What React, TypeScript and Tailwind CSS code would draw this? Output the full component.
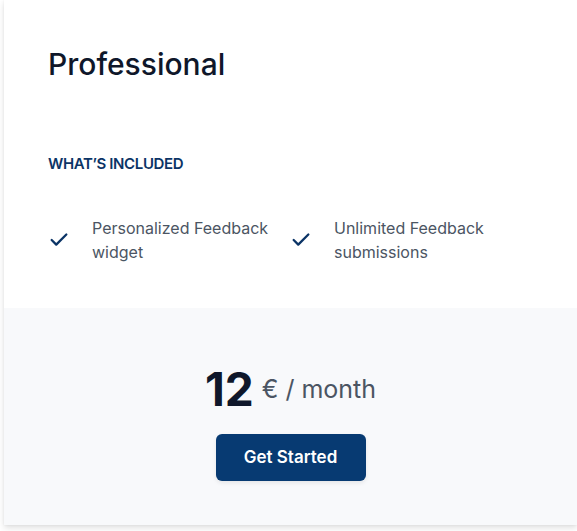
import React from 'react';

const features = ['Personalized Feedback widget', 'Unlimited Feedback submissions'];

const CheckIcon: React.FC = () => (
  <svg width="22" height="22" viewBox="0 0 24 24" fill="none" stroke="#0b3466" strokeWidth="2.5" strokeLinecap="round" strokeLinejoin="round" className="shrink-0">
    <path d="M20 6 9 17l-5-5" />
  </svg>
);

const App: React.FC = () => {
  return (
    <div className="min-h-[531px] w-[577px] bg-white font-['Inter',sans-serif]">
      <div className="ml-[4px] w-[573px] overflow-hidden bg-white shadow-[0_3px_6px_rgba(0,0,0,0.12),0_0_2px_rgba(0,0,0,0.06)]">
        <div className="px-[44px] pt-[46px] pb-[44px]">
          <h3 className="text-[30px] leading-[36px] font-medium text-[#0f172a]">Professional</h3>
          <h4 className="mt-[72px] text-[15px] leading-[20px] font-semibold uppercase tracking-tight text-[#0b3466]">
            What’s included
          </h4>
          <ul className="mt-[42px] grid grid-cols-[242px_1fr]">
            {features.map((f) => (
              <li key={f} className="flex items-center gap-[22px]">
                <CheckIcon />
                <span className="w-[190px] text-[16px] leading-[24px] text-[#4b5563]">{f}</span>
              </li>
            ))}
          </ul>
        </div>
        <div className="flex flex-col items-center bg-[#f8f9fb] pt-[59px] pb-[44px]">
          <div className="flex h-[44px] items-center">
            <span className="text-[46px] leading-none font-bold text-[#0f172a]">12</span>
            <span className="ml-2 text-[25px] leading-none text-[#4b5563]">€ / month</span>
          </div>
          <button className="mt-[23px] h-[47px] w-[150px] rounded-md bg-[#073a72] text-[17px] font-semibold text-white shadow-[0_2px_4px_rgba(0,0,0,0.08)]">
            Get Started
          </button>
        </div>
      </div>
    </div>
  );
};

export default App;
